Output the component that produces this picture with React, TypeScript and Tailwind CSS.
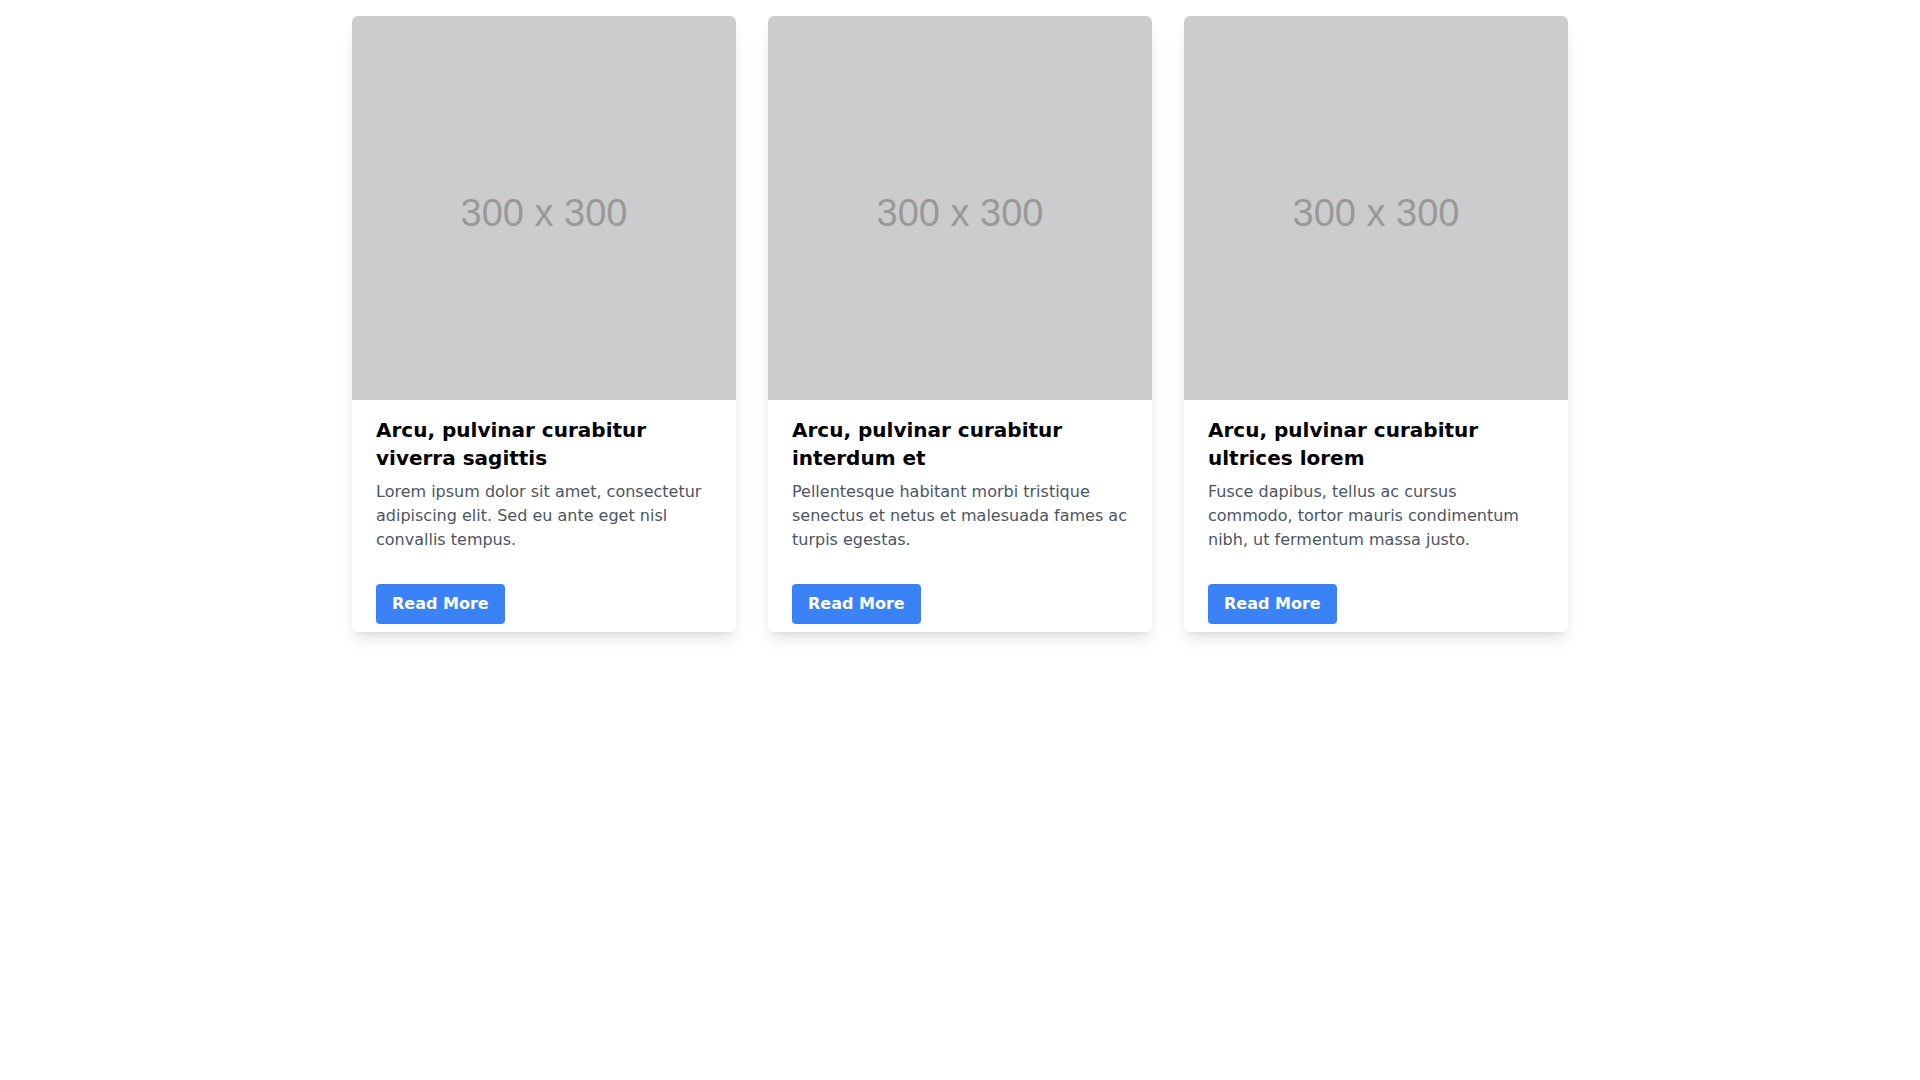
const posts = [
  {
    title: "Arcu, pulvinar curabitur viverra sagittis",
    body: "Lorem ipsum dolor sit amet, consectetur adipiscing elit. Sed eu ante eget nisl convallis tempus.",
  },
  {
    title: "Arcu, pulvinar curabitur interdum et",
    body: "Pellentesque habitant morbi tristique senectus et netus et malesuada fames ac turpis egestas.",
  },
  {
    title: "Arcu, pulvinar curabitur ultrices lorem",
    body: "Fusce dapibus, tellus ac cursus commodo, tortor mauris condimentum nibh, ut fermentum massa justo.",
  },
];

function Placeholder() {
  return (
    <div className="flex h-[384px] w-full items-center justify-center bg-[#cccccc]">
      <span className="mt-[10px] font-['Liberation_Sans',Arial,sans-serif] text-[38px] text-[#999999]">
        300 x 300
      </span>
    </div>
  );
}

export default function App() {
  return (
    <div className="min-h-screen bg-white font-['DejaVu_Sans',sans-serif]">
      <div className="mx-auto max-w-7xl px-8 py-4">
        <div className="grid grid-cols-3 gap-8">
          {posts.map((post) => (
            <div
              key={post.title}
              className="overflow-hidden rounded-md bg-white shadow-lg"
            >
              <Placeholder />
              <div className="px-6 pt-4 pb-2">
                <h2 className="text-xl font-bold leading-7 text-black">
                  {post.title}
                </h2>
                <p className="mt-2 text-base leading-6 text-[#4b5563]">
                  {post.body}
                </p>
                <button
                  type="button"
                  className="mt-8 h-10 rounded bg-[#3b82f6] px-4 text-base font-bold text-white"
                >
                  Read More
                </button>
              </div>
            </div>
          ))}
        </div>
      </div>
    </div>
  );
}
